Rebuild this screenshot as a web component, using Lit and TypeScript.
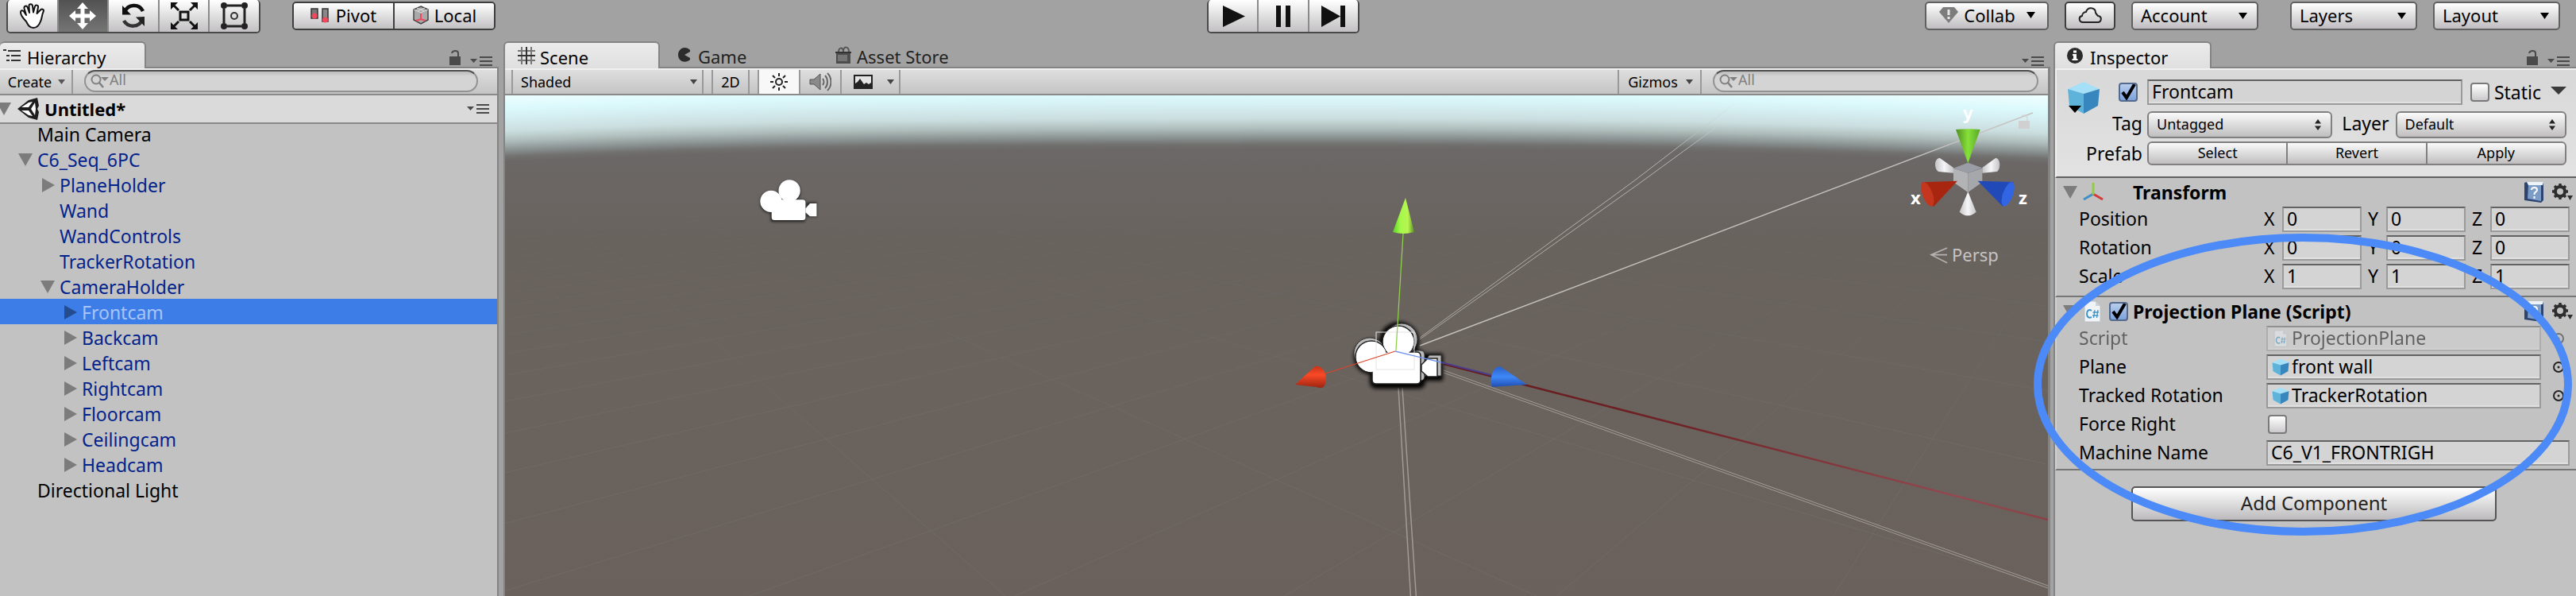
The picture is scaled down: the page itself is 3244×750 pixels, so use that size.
import { LitElement, html, svg, css, nothing } from "lit";
import { customElement } from "lit/decorators.js";
import { classMap } from "lit/directives/class-map.js";

/* ---------- icons ---------- */

const hand = html`<svg class="tool" viewBox="0 0 34 34" aria-hidden="true">
  <path d="M9 24 C5 20 2 15 2 12.500 C2 10 4.500 9.500 6 11.500 L9 16 L6.500 7.500 C6 4.500 9.500 3.500 10.500 6 L13 13 L12.500 4.500 C12.500 1.500 16.500 1.500 17 4.500 L18 12.500 L20 5 C21 2.500 24.500 3.500 24 6 L22.500 14 L27 9.500 C29 7.500 32 9 30.500 12 C28.500 16 29 20 27 24 C25.500 28 23 32 18 32 C13 32 11 28 9 24Z" fill="#fff" stroke="#111" stroke-width="2" stroke-linejoin="round"/></svg>`;

const move = html`<svg class="tool" viewBox="0 0 34 34" aria-hidden="true">
  <path d="M17 0 L24 8 H19.500 V14.500 H26 V10 L34 17 L26 24 V19.500 H19.500 V26 H24 L17 34 L10 26 H14.500 V19.500 H8 V24 L0 17 L8 10 V14.500 H14.500 V8 H10Z" fill="#fff"/></svg>`;

const rotate = html`<svg class="tool" viewBox="0 0 34 34" aria-hidden="true">
  <path d="M6 12 C10 2 24 1 29 11" fill="none" stroke="#111" stroke-width="4.500"/>
  <path d="M3 4 V15.500 H14Z" fill="#111"/>
  <path d="M28 22 C24 32 10 32 5 23" fill="none" stroke="#333" stroke-width="4.500"/>
  <path d="M31 18 V30 L20 18.500Z" fill="#222"/></svg>`;

const scale = html`<svg class="tool" viewBox="0 0 34 34" aria-hidden="true">
  <rect x="12" y="12" width="10" height="10" fill="none" stroke="#111" stroke-width="3"/>
  <path d="M2 2 L10 10 M32 2 L24 10 M2 32 L10 24 M32 32 L24 24" stroke="#111" stroke-width="3"/>
  <path d="M0 0 H9 L0 9Z M34 0 V9 L25 0Z M0 34 V25 L9 34Z M34 34 H25 L34 25Z" fill="#111"/></svg>`;

const rectTool = html`<svg class="tool" viewBox="0 0 34 34" aria-hidden="true">
  <path d="M8 4 H26 M8 30 H26 M4 8 V26 M30 8 V26" stroke="#222" stroke-width="3"/>
  <circle cx="17" cy="17" r="4" fill="none" stroke="#333" stroke-width="2"/>
  <g fill="#222"><circle cx="4" cy="4" r="4"/><circle cx="30" cy="4" r="4"/><circle cx="4" cy="30" r="4"/><circle cx="30" cy="30" r="4"/></g></svg>`;

const play = html`<svg class="tool" viewBox="0 0 34 34" aria-hidden="true"><path d="M4 4 L32 17.500 L4 31Z" fill="#111"/></svg>`;
const pause = html`<svg class="tool" viewBox="0 0 34 34" aria-hidden="true"><path d="M8 4 H14 V31 H8Z M20 4 H26 V31 H20Z" fill="#111"/></svg>`;
const step = html`<svg class="tool" viewBox="0 0 34 34" aria-hidden="true"><path d="M2 4 L26 17.500 L2 31Z M26 4 H32 V31 H26Z" fill="#111"/></svg>`;

const pivot = html`<svg width="24" height="20" viewBox="0 0 24 20" aria-hidden="true">
  <rect x="1" y="2" width="8" height="12" fill="#777" stroke="#333" stroke-width="1.500"/><circle cx="5" cy="11" r="3.500" fill="#f0485c"/>
  <rect x="15" y="2" width="7" height="16" fill="#888" stroke="#333" stroke-width="1.500"/><circle cx="18.500" cy="16" r="3.500" fill="#f0485c"/></svg>`;
const local = html`<svg width="22" height="24" viewBox="0 0 22 24" aria-hidden="true">
  <path d="M11 1 L20 5 V18 L11 23 L2 18 V5Z" fill="#a9a9a9" stroke="#444" stroke-width="1.500"/>
  <path d="M2 5 L11 9 L20 5 M6 3 L15 7 M16 3 L7 7" fill="none" stroke="#ddd" stroke-width="1"/>
  <path d="M11 10 V18 M5 19 L11 17 L17 19" stroke="#f0485c" stroke-width="2" fill="none"/></svg>`;
const collab = html`<svg width="26" height="22" viewBox="0 0 26 22" aria-hidden="true">
  <path d="M1 7 L6 1 H20 L25 7 L13 21Z" fill="#7c7c7c"/><path d="M13 4 V11 M13 13 V16" stroke="#e6e6e6" stroke-width="3"/></svg>`;
const cloud = html`<svg width="30" height="22" viewBox="0 0 30 22" aria-hidden="true">
  <path d="M6 20 C1 20 0 13 5 12 C5 8 9 7 10 7 C12 0 22 1 22 8 C23 10 24 11 25 12 C31 13 29 20 25 20Z" fill="none" stroke="#222" stroke-width="2"/></svg>`;

const caret = (w = 10, h = 6, cls = "") =>
  html`<svg class="caret ${cls}" width=${w} height=${h} viewBox="0 0 10 6" preserveAspectRatio="none" aria-hidden="true"><path d="M0 0 H10 L5 6Z" fill="currentColor"/></svg>`;
const updown = html`<svg class="caret" width="8" height="14" viewBox="0 0 8 14" aria-hidden="true"><path d="M0 5.500 L4 0 L8 5.500Z M0 8.500 H8 L4 14Z" fill="#222"/></svg>`;
const lock = html`<svg width="14" height="20" viewBox="0 0 14 20" aria-hidden="true">
  <path d="M0 8 H14 V19 H0Z" fill="#4a4a4a"/><path d="M3 4 C4 0 11 0 11 4 V8" fill="none" stroke="#4a4a4a" stroke-width="2"/></svg>`;
const menu = html`<svg width="28" height="12" viewBox="0 0 28 12" aria-hidden="true">
  <path d="M0 3 H9 L4.500 8Z" fill="#4a4a4a"/><path d="M12 1 H28 M12 6 H28 M12 11 H28" stroke="#4a4a4a" stroke-width="2"/></svg>`;
const listIcon = html`<svg width="22" height="18" viewBox="0 0 22 18" aria-hidden="true">
  <path d="M0 2 H4 M4 9 H8 M4 15 H8 M6 3 H22 M10 9 H22 M10 15 H22" stroke="#333" stroke-width="2"/></svg>`;
const gridIcon = html`<svg width="22" height="22" viewBox="0 0 22 22" aria-hidden="true">
  <path d="M5 0 V22 M17 0 V22 M0 5 H22 M0 17 H22" stroke="#777" stroke-width="2"/><path d="M11 0 V22 M0 11 H22" stroke="#333" stroke-width="2"/></svg>`;
const pac = html`<svg width="18" height="20" viewBox="0 0 18 20" aria-hidden="true">
  <path d="M16 4 C11 -2 1 1 1 10 C1 19 11 21 16 16 V14 L9 10 L16 6Z" fill="#2c2c2c"/></svg>`;
const store = html`<svg width="22" height="22" viewBox="0 0 22 22" aria-hidden="true">
  <path d="M2 8 H20 V22 H2Z" fill="#4d4d4d"/><path d="M4 11 H16 V19 H4Z" fill="#757575"/>
  <path d="M5 8 C5 1 11 1 11 7 M11 6 C11 0 18 0 18 7" fill="none" stroke="#555" stroke-width="2"/><path d="M1 8 H21" stroke="#333" stroke-width="2"/></svg>`;
const info = html`<svg width="22" height="20" viewBox="0 0 22 20" aria-hidden="true">
  <circle cx="11" cy="10" r="10" fill="#2c2c2c"/><path d="M9 3.500 H13 V6.500 H9Z M8 8 H13 V14 H14.500 V16 H7.500 V14 H9 V10 H8Z" fill="#fff"/></svg>`;
const unity = html`<svg width="28" height="28" viewBox="0 0 28 28" aria-hidden="true">
  <path d="M0 14 L14 3 L25 0 L27 10 L25 14 L27 18 L25 28 L14 25Z" fill="#1d1d1d"/>
  <path d="M5 12 L14 6 L19 5 L14 12Z M5 16 H14 L19 23 L14 22Z M17 14 L22 6 L23 14 L22 22Z" fill="#fff"/></svg>`;
const sun = html`<svg width="24" height="24" viewBox="0 0 24 24" aria-hidden="true">
  <circle cx="12" cy="12" r="4" fill="none" stroke="#222" stroke-width="2"/>
  <path d="M12 1 V5 M12 19 V23 M1 12 H5 M19 12 H23 M4 4 L7 7 M17 17 L20 20 M20 4 L17 7 M7 17 L4 20" stroke="#222" stroke-width="2"/></svg>`;
const speaker = html`<svg width="28" height="24" viewBox="0 0 28 24" aria-hidden="true">
  <path d="M1 9 H6 L14 2 V22 L6 15 H1Z" fill="#8a8a8a" stroke="#555"/>
  <path d="M17 8 C19 10 19 14 17 16 M20 4 C24 8 24 16 20 20 M23 1 C29 7 29 17 23 23" fill="none" stroke="#666" stroke-width="2"/></svg>`;
const picture = html`<svg width="24" height="18" viewBox="0 0 24 18" aria-hidden="true">
  <rect width="24" height="18" fill="#222"/><path d="M2 2 H22 V10 L19 12 L16 10 L13 12 L8 5 L5 9 L2 11Z" fill="#e4e4e4"/></svg>`;
const magnifier = html`<svg class="mag" width="24" height="18" viewBox="0 0 24 18" aria-hidden="true">
  <circle cx="7" cy="7" r="5.500" fill="none" stroke="#808080" stroke-width="2"/><path d="M11 11 L16 17" stroke="#808080" stroke-width="2.500"/>
  <path d="M13 4 H23 L18 9Z" fill="#808080"/></svg>`;
const cube = (w: number, h: number) => html`<svg width=${w} height=${h} viewBox="0 0 42 42" aria-hidden="true">
  <path d="M21 1 L41 10 L21 16 L1 10Z" fill="#a4e0f7"/><path d="M1 10 L21 16 V41 L3 31Z" fill="#5eb3db"/><path d="M41 10 L21 16 V41 L39 31Z" fill="#3786bd"/></svg>`;
const csharp = (w: number, h: number) => html`<svg width=${w} height=${h} viewBox="0 0 22 28" aria-hidden="true">
  <path d="M1 1 H15 L21 7 V27 H1Z" fill="#f1f4f6" stroke="#b9bec2"/><path d="M15 1 V7 H21Z" fill="#cdd3d8"/>
  <path d="M10 13 C6 10 4 14 4 17 C4 20 6 23 10 21" fill="none" stroke="#3d94c8" stroke-width="2"/>
  <path d="M14 12 L12.500 22 M18 12 L16.500 22 M11.500 15 H19 M11 19 H18.500" stroke="#3d94c8" stroke-width="1.300"/></svg>`;
const axes = html`<svg width="28" height="28" viewBox="0 0 28 28" aria-hidden="true">
  <path d="M14 16 L2 23" stroke="#3f8fc4" stroke-width="3"/><path d="M14 16 L26 23" stroke="#d63a35" stroke-width="3"/><path d="M14 17 V2" stroke="#93cc44" stroke-width="3"/></svg>`;
const book = html`<svg width="26" height="28" viewBox="0 0 26 28" aria-hidden="true">
  <path d="M1 2 L4 1 H25 V24 L22 27 L1 24Z" fill="#2b4470"/><path d="M4 1 H25 L24 5 H6Z" fill="#eef3f8"/><path d="M6 5 H22 V25 L5 22Z" fill="#7c9cc8"/>
  <path d="M10 11 C10 7 17 7 17 11 C17 14 13 13 13.500 17 M13.500 19 V22" fill="none" stroke="#fff" stroke-width="2"/></svg>`;
const gear = html`<svg width="26" height="24" viewBox="0 0 26 24" aria-hidden="true">
  <circle cx="10" cy="11" r="6" fill="none" stroke="#2e2e2e" stroke-width="4"/>
  <path d="M10 1 V5 M10 17 V21 M0 11 H4 M16 11 H20 M3 4 L6 7 M14 15 L17 18 M17 4 L14 7 M6 15 L3 18" stroke="#2e2e2e" stroke-width="3.500"/>
  <path d="M19 16 H26 L22.500 22Z" fill="#2e2e2e"/></svg>`;
const target = html`<svg width="16" height="16" viewBox="0 0 16 16" aria-hidden="true">
  <circle cx="8" cy="8" r="6" fill="none" stroke="#222" stroke-width="2"/><circle cx="8" cy="8" r="1.500" fill="#222"/></svg>`;
const open = html`<svg width="18" height="16" viewBox="0 0 18 16" aria-hidden="true"><path d="M0 0 H18 L9 16Z" fill="currentColor"/></svg>`;
const closed = html`<svg width="18" height="18" viewBox="0 0 18 18" aria-hidden="true"><path d="M2 0 V18 L18 9Z" fill="currentColor"/></svg>`;

/* ---------- shared styles ---------- */

const base = css`
  * { box-sizing: border-box; }
  button, input, select { font: inherit; color: inherit; margin: 0; border-radius: 0; appearance: none; outline: none; }
  button { display: flex; align-items: center; justify-content: center; padding: 0; border: 0; background: none; }
  svg { flex: none; display: block; }
  .tabs { display: flex; height: 32px; align-items: flex-start; color: #222; }
  .tab { display: flex; align-items: center; justify-content: flex-start; gap: 8px; height: 32px; padding: 4px 0 0; border: 0 solid transparent; border-width: 2px 2px 0; }
  .tab.on { height: 34px; color: #000; background: linear-gradient(#ebebeb, #dfdfdf); border-color: #848484; border-radius: 6px 6px 0 0; z-index: 1; }
  .corner { display: flex; align-items: flex-end; gap: 12px; height: 31px; margin-left: auto; }
  .body { border: 2px solid #848484; border-width: 2px 0 0; flex: 1; min-height: 0; }
  .strip { display: flex; height: 34px; border-top: 2px solid #f0f0f0; border-bottom: 2px solid #8a8a8a; background: linear-gradient(#dedede, #c4c4c4); font-size: 18px; }
  .strip > button { border-right: 2px solid #999; }
  .search { display: grid; flex: 1; align-items: center; height: 28px; }
  .search > * { grid-area: 1 / 1; }
  .search input { width: 100%; height: 28px; padding: 0 12px 4px 30px; border: 2px solid #929292; border-top-color: #505050; border-radius: 14px; background: linear-gradient(#bcbcbc, #d4d4d4 6px); }
  .search input::placeholder { color: #808080; opacity: 1; }
  .mag { margin-left: 8px; }
  .dd { display: grid; align-items: center; }
  .dd > * { grid-area: 1 / 1; }
  .dd .caret { justify-self: end; margin-right: 14px; pointer-events: none; }
  .dd select { width: 100%; height: 100%; }
`;

/* ---------- top toolbar ---------- */

@customElement("editor-toolbar")
class EditorToolbar extends LitElement {
  static styles = [base, css`
    :host { display: grid; grid-template-columns: minmax(0, 1fr) auto minmax(0, 1fr); height: 52px; padding: 0 20px 0 8px; }
    .side { display: flex; gap: 40px; }
    .right { justify-content: flex-end; gap: 20px; padding-top: 2px; }
    .group { display: flex; width: 320px; height: 42px; border: 2px solid #4a4a4a; border-top-width: 0; border-radius: 5px; overflow: hidden; }
    .group button { flex: 1; background: linear-gradient(#fff, #c2c0c2); border-left: 2px solid #8a8a8a; }
    .group button:first-child { border-left: 0; }
    .group .on { background: linear-gradient(#525252, #757575); }
    .group.play { width: 192px; }
    .tool { width: 34px; height: 34px; }
    .pair { width: 256px; height: 36px; margin-top: 2px; border: 2px solid #3e3e3e; }
    .pair button { gap: 6px; padding-bottom: 2px; border-left-color: #3e3e3e; }
    .pair button:first-child { gap: 8px; }
    .pill { height: 36px; padding-bottom: 2px; border: 2px solid #606060; border-radius: 5px; background: linear-gradient(#fff, #bfbdbf); }
    .collab { width: 156px; gap: 6px; }
    .collab .caret { margin-left: 8px; }
    .cloud { width: 64px; border-color: #3e3e3e; }
    .dd { width: 160px; height: 36px; }
    .dd select { padding: 0 10px 2px; }
    .wide { margin-left: 20px; }
  `];
  render() {
    const tools: [string, unknown][] = [["Hand", hand], ["Move", move], ["Rotate", rotate], ["Scale", scale], ["Rect", rectTool]];
    return html`
      <div class="side">
        <div class="group">${tools.map(([n, i]) => html`<button aria-label=${n} class=${classMap({ on: n === "Move" })}>${i}</button>`)}</div>
        <div class="group pair"><button>${pivot}Pivot</button><button>${local}Local</button></div>
      </div>
      <div class="group play"><button aria-label="Play">${play}</button><button aria-label="Pause">${pause}</button><button aria-label="Step">${step}</button></div>
      <div class="side right">
        <button class="pill collab">${collab}Collab${caret(11, 8)}</button>
        <button class="pill cloud" aria-label="Services">${cloud}</button>
        ${["Account", "Layers", "Layout"].map((n) => html`
          <span class=${classMap({ dd: true, wide: n === "Layers" })}>
            <select class="pill" aria-label=${n}><option>${n}</option></select>${caret(11, 8)}
          </span>`)}
      </div>`;
  }
}

/* ---------- hierarchy ---------- */

interface Row { name: string; depth: number; state?: "open" | "closed"; plain?: boolean; selected?: boolean; }

const rows: Row[] = [
  { name: "Main Camera", depth: 0, plain: true },
  { name: "C6_Seq_6PC", depth: 0, state: "open" },
  { name: "PlaneHolder", depth: 1, state: "closed" },
  { name: "Wand", depth: 1 },
  { name: "WandControls", depth: 1 },
  { name: "TrackerRotation", depth: 1 },
  { name: "CameraHolder", depth: 1, state: "open" },
  { name: "Frontcam", depth: 2, state: "closed", selected: true },
  ...["Backcam", "Leftcam", "Rightcam", "Floorcam", "Ceilingcam", "Headcam"].map((name): Row => ({ name, depth: 2, state: "closed" })),
  { name: "Directional Light", depth: 0, plain: true },
];

@customElement("hierarchy-panel")
class HierarchyPanel extends LitElement {
  static styles = [base, css`
    :host { display: flex; flex-direction: column; min-height: 0; }
    .tab { width: 184px; padding-left: 4px; border-left: 0; }
    .tab svg { margin-bottom: 4px; }
    .corner { padding-right: 8px; }
    .body { border-right-width: 2px; background: #c2c2c2; display: flex; flex-direction: column; }
    .create { width: 92px; gap: 8px; padding-left: 2px; color: #000; }
    .create .caret { color: #555; }
    .search { margin: 0 24px 0 14px; }
    .scene { display: flex; align-items: center; height: 36px; border-bottom: 2px solid #8a8a8a; background: #dadada; font-weight: 700; overflow: hidden; }
    .scene .arrow { margin-left: -4px; color: #7c7c7c; }
    .scene .logo { margin: 0 6px 0 8px; }
    .scene .menu { margin: 0 10px 0 auto; }
    ul { list-style: none; margin: -4px 0 0; padding: 0; font-size: 23px; }
    li { display: flex; align-items: center; height: 32px; padding: 1px 0 0 23px; color: #03238c; }
    li.d1 { padding-left: 51px; }
    li.d2 { padding-left: 79px; }
    li.plain { color: #000; }
    li.selected { background: #3d7de8; color: #a9c5f7; }
    .twist { width: 24px; color: #7c7c7c; }
    .selected .twist { color: #254c8f; }
  `];
  render() {
    return html`
      <div class="tabs"><button class="tab on">${listIcon}Hierarchy</button><span class="corner">${lock}${menu}</span></div>
      <div class="body">
        <div class="strip">
          <button class="create">Create ${caret(9, 6)}</button>
          <label class="search"><input type="text" placeholder="All" aria-label="Search hierarchy" />${magnifier}</label>
        </div>
        <div class="scene"><span class="arrow">${open}</span><span class="logo">${unity}</span>Untitled*<span class="menu">${menu}</span></div>
        <ul>${rows.map((r) => html`
          <li class=${classMap({ ["d" + r.depth]: true, plain: !!r.plain, selected: !!r.selected })}>
            <span class="twist">${r.state === "open" ? open : r.state === "closed" ? closed : nothing}</span>${r.name}
          </li>`)}</ul>
      </div>`;
  }
}

/* ---------- scene ---------- */

/* Sky colour by height above the horizon line. */
const skyStops: [number, number[]][] = [
  [0, [108, 104, 103]], [6, [114, 114, 113]], [14, [138, 146, 145]], [26, [176, 191, 189]],
  [38, [203, 222, 223]], [54, [213, 238, 241]], [66, [219, 249, 252]], [90, [245, 255, 255]],
];
const skyColor = (d: number) => {
  let i = 1;
  while (i < skyStops.length - 1 && skyStops[i][0] < d) i++;
  const [d0, a] = skyStops[i - 1];
  const [d1, b] = skyStops[i];
  const t = Math.min(1, (d - d0) / (d1 - d0));
  return `rgb(${a.map((v, k) => Math.round(v + (b[k] - v) * t)).join(",")})`;
};
const horizon = (dy: number) =>
  `M600 ${204 - dy} C950 ${188 - dy} 1150 ${188 - dy} 1560 ${187 - dy} S2250 ${190 - dy} 2620 ${207 - dy}`;

/* Ground plane to screen. */
const project = (u: number, v: number) => {
  const w = 1 - 0.1009 * u - 0.1897 * v;
  const x = (299.9 * u - 654.9 * v + 770) / w;
  const y = (23.8 * u + 59.7 * v + 860) / w;
  return `${(1560 + x / 3).toFixed(1)} ${(220 + y / 2.958).toFixed(1)}`;
};
const gridPath = () => {
  let d = "";
  for (let u = -24; u <= 8; u++) d += `M${project(u, -30)}L${project(u, Math.min(5, (0.88 - 0.1009 * u) / 0.1897))}`;
  for (let v = -14; v <= 5; v++) d += `M${project(-50, v)}L${project(Math.min(9, (0.88 - 0.1897 * v) / 0.1009), v)}`;
  return d;
};

@customElement("scene-panel")
class ScenePanel extends LitElement {
  static styles = [base, css`
    :host { display: flex; flex-direction: column; min-width: 0; min-height: 0; margin: 0 4px 0 6px; }
    .scene { width: 197px; padding-left: 16px; margin-right: 20px; gap: 6px; }
    .game { width: 198px; }
    .tab svg { margin-bottom: 4px; }
    .store { gap: 6px; }
    .corner { padding-right: 8px; }
    .body { display: flex; flex-direction: column; border-width: 2px 3px 0 2px; }
    .strip { color: #000; }
    .gap { width: 10px; border-right: 2px solid #999; }
    .gap.wide { width: 12px; }
    .shaded { width: 240px; justify-content: space-between; padding: 0 6px 0 10px; }
    .two { width: 46px; }
    .light { width: 52px; background: #f8f8f8; }
    .audio { width: 52px; }
    .fx { width: 74px; gap: 12px; padding-left: 8px; }
    .fx svg:last-child { margin-left: 6px; }
    .caret { color: #444; }
    .rest { display: flex; margin-left: auto; }
    .gizmos { width: 106px; gap: 10px; border: 2px solid #999; border-width: 0 2px; padding-left: 2px; }
    .search { width: 410px; flex: none; margin: 0 12px 0 14px; }
    .view { flex: 1; min-height: 0; width: 100%; background: #6a615c; }
    text { font-size: 22px; font-weight: 700; fill: #fff; }
    .persp { font-weight: 400; fill: #c6c4c3; }
  `];
  render() {
    const bands = Array.from({ length: 95 }, (_, i) => 95 - i);
    return html`
      <div class="tabs">
        <button class="tab on scene">${gridIcon}Scene</button>
        <button class="tab game">${pac}Game</button>
        <button class="tab store">${store}Asset Store</button>
        <span class="corner">${menu}</span>
      </div>
      <div class="body">
        <div class="strip">
          <span class="gap"></span><button class="shaded">Shaded${caret(9, 6)}</button>
          <span class="gap wide"></span><button class="two">2D</button>
          <span class="gap wide"></span><button class="light" aria-label="Lighting">${sun}</button>
          <button class="audio" aria-label="Audio">${speaker}</button>
          <button class="fx" aria-label="Effects">${picture}${caret(9, 6)}</button>
          <div class="rest">
            <button class="gizmos">Gizmos${caret(9, 6)}</button>
          </div>
          <label class="search"><input type="text" placeholder="All" aria-label="Search scene" />${magnifier}</label>
        </div>
        <svg class="view" viewBox="636 120 1943 630" preserveAspectRatio="xMidYMid slice" role="img" aria-label="Scene view">
          <defs>
            <linearGradient id="ground" x1="0" y1="0" x2="0" y2="1"><stop offset="0" stop-color="#6c6867"/><stop offset=".2" stop-color="#69635e"/><stop offset="1" stop-color="#6a615c"/></linearGradient>
            <linearGradient id="fade" gradientUnits="userSpaceOnUse" x1="0" y1="200" x2="0" y2="560"><stop offset="0" stop-color="#000"/><stop offset="1" stop-color="#fff"/></linearGradient>
            <mask id="far" maskUnits="userSpaceOnUse" x="600" y="200" width="2000" height="560"><rect x="600" y="200" width="2000" height="560" fill="url(#fade)"/></mask>
            <linearGradient id="axis" gradientUnits="userSpaceOnUse" x1="1818" y1="457" x2="2579" y2="654"><stop offset="0" stop-color="#651a1c"/><stop offset=".4" stop-color="#702326"/><stop offset=".85" stop-color="#95484f"/><stop offset="1" stop-color="#8c4046"/></linearGradient>
            <linearGradient id="ray" gradientUnits="userSpaceOnUse" x1="1788" y1="0" x2="2200" y2="0"><stop offset="0" stop-color="#aaa6a3"/><stop offset=".8" stop-color="#b4b2b0"/><stop offset="1" stop-color="#d8f0f2" stop-opacity=".2"/></linearGradient>
            <linearGradient id="green" x1="0" x2="1"><stop offset="0" stop-color="#58d020"/><stop offset=".35" stop-color="#a5f84a"/><stop offset=".7" stop-color="#b8f552"/><stop offset="1" stop-color="#5a8f20"/></linearGradient>
            <linearGradient id="red" x1="0" y1="0" x2="0" y2="1"><stop offset="0" stop-color="#c83418"/><stop offset=".4" stop-color="#fa4a28"/><stop offset="1" stop-color="#9c2410"/></linearGradient>
            <linearGradient id="blue" x1="0" y1="0" x2="0" y2="1"><stop offset="0" stop-color="#2a5fc8"/><stop offset=".5" stop-color="#3f88f8"/><stop offset="1" stop-color="#1f4fb0"/></linearGradient>
            <linearGradient id="limb" x1="0" x2="1"><stop offset="0" stop-color="#c4c4c6"/><stop offset=".5" stop-color="#f6f6f8"/><stop offset="1" stop-color="#c4c4c8"/></linearGradient>
            <linearGradient id="leaf" x1="0" x2="1"><stop offset="0" stop-color="#4f8f20"/><stop offset=".5" stop-color="#86e03a"/><stop offset="1" stop-color="#5aa826"/></linearGradient>
            <filter id="glow" x="-20%" y="-20%" width="140%" height="140%"><feGaussianBlur stdDeviation="2.500"/></filter>
          </defs>
          <rect x="600" y="100" width="2000" height="660" fill="#f5ffff"/>
          ${bands.map((d) => svg`<path d="${horizon(d)} V760 H600Z" fill=${skyColor(d)}/>`)}
          <path d="${horizon(0)} V760 H600Z" fill="url(#ground)"/>
          <path d=${gridPath()} stroke="#74777a" stroke-opacity=".4" fill="none" mask="url(#far)"/>

          <g stroke="#a09b98" stroke-width="1" fill="none">
            <path d="M1788 425 L2060 226 L2185 130 M1788 427 L2060 234 L2200 132" stroke="url(#ray)"/>
            <path d="M1788 435 L2560 142" stroke="#c4c2bf" stroke-width="1.400"/>
            <path d="M1818 466 L2579 737 M1818 469 L2579 740"/>
            <path d="M1761 488 L1777 760 M1766 488 L1784 760" stroke-width="1.500"/>
          </g>
          <path d="M1818 458 L2579 654" stroke="url(#axis)" stroke-width="2.500"/>

          <g transform="translate(957 226) scale(.7)">
            <g fill="#222" filter="url(#glow)"><circle cx="53" cy="22" r="20"/><circle cx="20" cy="41" r="20"/><rect x="19" y="36" width="63" height="40" rx="5"/><rect x="84" y="41" width="18" height="26"/></g>
            <g fill="#fff"><circle cx="53" cy="20" r="19.500"/><circle cx="20" cy="39" r="19.500"/><path d="M21 36 H77 Q82 36 82 41 V68 Q82 73 77 73 H26 Q21 73 21 68Z"/><path d="M82 52 L90 43 H102 V66 H90 L82 59Z"/></g>
          </g>

          <g transform="translate(0 3)">
            <g fill="#000" filter="url(#glow)"><circle cx="1762" cy="427" r="25"/><circle cx="1727" cy="446" r="22"/><rect x="1725" y="438" width="70" height="48" rx="8"/><rect x="1790" y="442" width="27" height="34"/></g>
            <g fill="#bbb" stroke="#333"><circle cx="1765" cy="424" r="20"/><circle cx="1725" cy="442" r="20"/><rect x="1780" y="438" width="14" height="38" rx="5"/><path d="M1794 452 L1800 444 H1815 V470 H1794Z"/></g>
            <g fill="#fff" stroke="#222" stroke-width="1.500"><circle cx="1761" cy="427" r="20"/><circle cx="1727" cy="446" r="20"/><path d="M1728 440 H1784 Q1789 440 1789 445 V475 Q1789 480 1784 480 H1733 Q1728 480 1728 475Z"/><path d="M1790 456 L1798 448 H1810 V471 H1798 L1790 464Z"/></g>
            <g fill="#fff"><circle cx="1761" cy="427" r="19"/><circle cx="1727" cy="446" r="19"/><path d="M1729 441 H1783 Q1788 441 1788 446 V474 Q1788 479 1783 479 H1734 Q1729 479 1729 474Z"/></g>
            <rect x="1733" y="415" width="48" height="47" fill="none" stroke="#e4e4e4"/>
            <g fill="none" stroke-width="1.300">
              <path d="M1767 291 L1758 438" stroke="#8fd04a"/><path d="M1757 439 L1660 470" stroke="#d8452c"/>
              <path d="M1757 439 L1815 453" stroke="#6f93ea"/><path d="M1815 453 L1878 469" stroke="#4a3d8c" stroke-width="2"/>
            </g>
            <path d="M1631 481 L1656 458 C1668 456 1674 474 1667 484 Q1662 486 1658 484Z" fill="url(#red)"/>
            <path d="M1923 481 L1889 458 C1880 458 1875 474 1879 484Z" fill="url(#blue)"/>
          </g>
          <path d="M1770 249 L1781 292 Q1768 296 1754 292Z" fill="url(#green)"/>

          <g transform="translate(2400 150) scale(.3333)">
            <path d="M180 183 L128 146 C104 150 108 190 124 198 L180 203Z" fill="url(#limb)"/><path d="M289 183 L340 146 C360 150 358 190 344 198 L289 203Z" fill="url(#limb)"/>
            <path d="M180 185 L235 203 V276 L180 238Z" fill="#b2b3b5"/><path d="M289 185 L235 203 V276 L289 238Z" fill="#a6a7aa"/><path d="M180 185 L235 164 L289 184 L235 203Z" fill="#9a9ca6"/>
            <path d="M235 274 L203 350 Q234 378 266 350Z" fill="url(#limb)"/>
            <path d="M189 39 Q235 34 281 39 L235 166Z" fill="url(#leaf)"/>
            <path d="M195 233 L64 238 C54 250 80 330 106 329Z" fill="#a8260f"/><ellipse cx="82" cy="283" rx="19" ry="48" transform="rotate(-20 82 283)" fill="#c5361f"/>
            <path d="M272 233 L405 237 C414 250 394 320 366 329Z" fill="#2149b8"/><ellipse cx="386" cy="283" rx="19" ry="48" transform="rotate(20 386 283)" fill="#3265e4"/>
            <path d="M156 486 L96 512 L156 542 M98 512 H156" fill="none" stroke="#b5b2af" stroke-width="5"/>
          </g>
          <path d="M2542 152 H2556 V162 H2542Z" fill="#d0d0d0"/><path d="M2545 148 Q2549 142 2553 148 V152" fill="none" stroke="#d0d0d0" stroke-opacity=".6" stroke-width="2"/>
          <text x="2472" y="150">y</text><text x="2406" y="257">x</text><text x="2542" y="257">z</text>
          <text class="persp" x="2458" y="329">Persp</text>
        </svg>
      </div>`;
  }
}

/* ---------- inspector ---------- */

@customElement("inspector-panel")
class InspectorPanel extends LitElement {
  static styles = [base, css`
    :host { display: flex; flex-direction: column; position: relative; min-height: 0; }
    .tab { width: 199px; padding-left: 14px; }
    .tab svg { margin-bottom: 4px; }
    .corner { padding-right: 8px; }
    .body { display: flex; flex-direction: column; border-left-width: 2px; background: #c2c2c2; font-size: 23px; color: #000; }
    .object { display: flex; padding: 12px 12px 14px 12px; height: 138px; border: 2px solid #f0f0f0; border-width: 2px 0 0 2px; border-bottom: 2px solid #606060; background: linear-gradient(#d8d8d8, #e2e2e2); }
    .icon { display: grid; align-content: start; width: 44px; padding-top: 2px; }
    .icon > * { grid-area: 1 / 1; }
    .icon .caret { align-self: end; margin: 0 0 2px 3px; }
    .fields { display: flex; flex-direction: column; flex: 1; gap: 8px; }
    .line { display: grid; grid-template-columns: 58px minmax(0, 1fr); align-items: center; justify-items: end; height: 30px; }
    .line:first-child { height: 32px; }
    .line > :first-child { padding-right: 6px; }
    .line > input:first-child { margin-right: 12px; padding: 0; }
    .cells { display: flex; align-items: center; width: 100%; }
    .cells label { padding: 0 8px 0 12px; }
    .dd { height: 30px; flex: 235; }
    .dd.layer { flex: 217; }
    .dd select { padding: 0 10px 2px; font-size: 18px; border: 2px solid #808080; border-radius: 6px; background: linear-gradient(#fafafa, #c0bebf); }
    .prefab { display: flex; width: 100%; height: 30px; border: 2px solid #808080; border-radius: 6px; background: linear-gradient(#fafafa, #c0bebf); font-size: 18px; }
    .prefab button { flex: 1; padding-bottom: 2px; border-left: 2px solid #808080; }
    .prefab button:first-child { border-left: 0; }
    input[type="text"] { width: 100%; min-width: 0; height: 32px; padding: 0 8px 2px 4px; border: 2px solid #9a9a9a; border-top-color: #626262; background: #d4d4d4; box-shadow: inset 0 -2px #e0e0e0; }
    input[type="checkbox"] { flex: none; width: 24px; height: 24px; border: 2px solid #7a7a7a; border-radius: 4px; background: linear-gradient(#fff, #cbc9cb); }
    input[type="checkbox"]:checked { border-color: #556a8c; background: url('data:image/svg+xml,<svg xmlns="http://www.w3.org/2000/svg" viewBox="0 0 20 20"><path d="M3 10 L8 17 L18 0" fill="none" stroke="black" stroke-width="4"/></svg>'), linear-gradient(#b8cdec, #7ca2dc); }
    .name { flex: 1; }
    .static { margin-left: 10px; }
    .cells .static-label { padding: 0 0 0 6px; }
    .down { margin: 0 0 4px 12px; color: #3a3a3a; }
    .component { border-bottom: 2px solid #767676; border-left: 2px solid #d0d0d0; padding: 0 8px 8px 28px; }
    .component.script { padding-bottom: 4px; }
    header { display: flex; align-items: center; height: 36px; margin: 0 -4px 0 -20px; font-weight: 700; color: #000; }
    header .axes { margin: 0 36px 0 6px; }
    header .cs { margin: 0 10px 0 8px; }
    header label { margin-left: 6px; }
    header .twist { color: #7c7c7c; }
    header .help { display: flex; align-items: center; gap: 10px; margin-left: auto; }
    .rows { display: flex; flex-direction: column; gap: 4px; }
    .row { display: grid; grid-template-columns: 236px minmax(0, 1fr); align-items: center; height: 32px; }
    .row > :first-child, .axis span { padding-bottom: 3px; }
    .xyz { display: grid; grid-template-columns: repeat(3, minmax(0, 1fr)); column-gap: 8px; margin-left: -3px; }
    .axis { display: grid; grid-template-columns: 23px minmax(0, 1fr); align-items: center; }
    .ref { display: grid; grid-template-columns: minmax(0, 1fr) 36px; align-items: center; }
    .ref > svg { margin: 0 0 0 14px; }
    .slot { display: grid; align-items: center; }
    .slot > * { grid-area: 1 / 1; }
    .slot > svg { margin-left: 7px; }
    .slot input[type="text"] { padding-left: 30px; }
    .off { opacity: .5; }
    .row input[type="checkbox"] { margin: 0 2px; padding: 0; }
    .add { align-self: center; width: 460px; max-width: 100%; height: 44px; margin: 20px 4px 0 0; padding-bottom: 2px; font-size: 24px; color: #222; border: 2px solid #555; border-radius: 5px; background: linear-gradient(#fff, #bcbabc); }
    .ring { position: absolute; right: 4px; top: 242px; width: 680px; height: 380px; pointer-events: none; }
  `];
  private ref(id: string, label: string, value: string, icon: unknown, off = false) {
    return html`<div class=${classMap({ row: true, off })}>
      <label for=${id}>${label}</label>
      <div class="ref"><span class="slot"><input id=${id} type="text" readonly .value=${value} ?disabled=${off} />${icon}</span>${target}</div>
    </div>`;
  }
  render() {
    return html`
      <div class="tabs"><button class="tab on">${info}Inspector</button><span class="corner">${lock}${menu}</span></div>
      <div class="body">
        <div class="object">
          <div class="icon">${cube(44, 42)}${caret(16, 9)}</div>
          <div class="fields">
            <div class="line">
              <input type="checkbox" checked aria-label="Active" />
              <div class="cells">
                <input class="name" type="text" aria-label="Name" .value=${"Frontcam"} />
                <input id="static" class="static" type="checkbox" /><label for="static" class="static-label">Static</label>${caret(20, 10, "down")}
              </div>
            </div>
            <div class="line">
              <label for="tag">Tag</label>
              <div class="cells">
                <span class="dd"><select id="tag"><option>Untagged</option></select>${updown}</span>
                <label for="layer">Layer</label>
                <span class="dd layer"><select id="layer"><option>Default</option></select>${updown}</span>
              </div>
            </div>
            <div class="line"><span>Prefab</span><div class="prefab"><button>Select</button><button>Revert</button><button>Apply</button></div></div>
          </div>
        </div>
        <section class="component">
          <header><span class="twist">${open}</span><span class="axes">${axes}</span>Transform<span class="help">${book}${gear}</span></header>
          <div class="rows">
            ${([["Position", "0"], ["Rotation", "0"], ["Scale", "1"]]).map(([n, v]) => html`
              <div class="row"><span>${n}</span><div class="xyz">
                ${["X", "Y", "Z"].map((a) => html`<label class="axis"><span>${a}</span><input type="text" .value=${v} /></label>`)}
              </div></div>`)}
          </div>
        </section>
        <section class="component script">
          <header><span class="twist">${open}</span><span class="cs">${csharp(22, 28)}</span><input id="enabled" type="checkbox" checked /><label for="enabled">Projection Plane (Script)</label><span class="help">${book}${gear}</span></header>
          <div class="rows">
            ${this.ref("script", "Script", "ProjectionPlane", csharp(22, 22), true)}
            ${this.ref("plane", "Plane", "front wall", cube(22, 22))}
            ${this.ref("rotation", "Tracked Rotation", "TrackerRotation", cube(22, 22))}
            <div class="row"><label for="force">Force Right</label><input id="force" type="checkbox" /></div>
            <div class="row"><label for="machine">Machine Name</label><input id="machine" type="text" .value=${"C6_V1_FRONTRIGH"} /></div>
          </div>
        </section>
        <button class="add">Add Component</button>
      </div>
      <svg class="ring" viewBox="0 0 680 380" aria-hidden="true"><ellipse cx="340" cy="190" rx="334" ry="185" fill="none" stroke="#4b8af7" stroke-width="10"/></svg>`;
  }
}

/* ---------- window ---------- */

@customElement("app-root")
class AppRoot extends LitElement {
  static styles = css`
    :host { display: grid; grid-template-rows: auto minmax(0, 1fr); height: 100vh; overflow: hidden; background: #a2a2a2; color: #000; font-family: "Noto Sans", "Open Sans", sans-serif; font-size: 22px; line-height: 28px; }
    main { display: grid; grid-template-columns: 628px minmax(0, 1fr) 658px; min-height: 0; }
  `;
  render() {
    return html`<editor-toolbar></editor-toolbar><main><hierarchy-panel></hierarchy-panel><scene-panel></scene-panel><inspector-panel></inspector-panel></main>`;
  }
}
